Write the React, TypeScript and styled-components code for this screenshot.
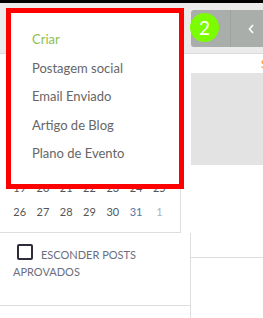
import styled, { createGlobalStyle } from "styled-components";

const GlobalStyle = createGlobalStyle`
  html, body {
    margin: 0;
    padding: 0;
    background: #ffffff;
    font-family: Lato, "Open Sans", sans-serif;
  }
`;

const weekdays = ["D", "S", "T", "Q", "Q", "S", "S"];

type Day = { n: number; muted?: boolean; today?: boolean };

const weeks: Day[][] = [
  [{ n: 1 }, { n: 2 }, { n: 3 }, { n: 4 }, { n: 5 }, { n: 6 }, { n: 7 }],
  [{ n: 8 }, { n: 9 }, { n: 10 }, { n: 11 }, { n: 12 }, { n: 13 }, { n: 14 }],
  [{ n: 15 }, { n: 16 }, { n: 17 }, { n: 18 }, { n: 19 }, { n: 20 }, { n: 21 }],
  [{ n: 19 }, { n: 20 }, { n: 21 }, { n: 22 }, { n: 23 }, { n: 24 }, { n: 25 }],
  [
    { n: 26 },
    { n: 27 },
    { n: 28 },
    { n: 29 },
    { n: 30 },
    { n: 31, today: true },
    { n: 1, muted: true },
  ],
];

const menuItems = [
  "Postagem social",
  "Email Enviado",
  "Artigo de Blog",
  "Plano de Evento",
];

const App = () => {
  return (
    <Page>
      <GlobalStyle />
      <TopBar />

      <Header>
        <div />
        <ButtonGroup>
          <Segment>
            <SegmentLabel>0</SegmentLabel>
          </Segment>
          <Segment $narrow>
            <svg width="6" height="10" viewBox="0 0 6 10">
              <polyline
                points="5,1 1.5,5 5,9"
                fill="none"
                stroke="#ffffff"
                strokeWidth="1.6"
              />
            </svg>
          </Segment>
          <Badge>2</Badge>
        </ButtonGroup>
      </Header>

      <Body>
        <Sidebar>
          <Calendar>
            <MonthTitle>Dezembro 2019</MonthTitle>
            <DayGrid>
              {weekdays.map((w, i) => (
                <WeekdayCell key={i}>{w}</WeekdayCell>
              ))}
              {weeks.flat().map((d, i) => (
                <DayCell key={i} $muted={d.muted} $today={d.today}>
                  {d.n}
                </DayCell>
              ))}
            </DayGrid>
          </Calendar>

          <LowerSidebar>
            <FilterRow>
              <Checkbox />
              Esconder posts aprovados
            </FilterRow>
          </LowerSidebar>
        </Sidebar>

        <Main>
          <ViewRow>
            <ViewLabel>Semana</ViewLabel>
          </ViewRow>
          <GreyPanel />
          <WeekBlock />
        </Main>
      </Body>

      <Dropdown>
        <MenuItem $primary>Criar</MenuItem>
        {menuItems.map((item) => (
          <MenuItem key={item}>{item}</MenuItem>
        ))}
      </Dropdown>
    </Page>
  );
};

export default App;

const Page = styled.div`
  position: relative;
  height: 100vh;
  display: flex;
  flex-direction: column;
  overflow: hidden;
`;

const TopBar = styled.div`
  height: 3px;
  background: #000000;
`;

const Header = styled.div`
  height: 50px;
  display: grid;
  grid-template-columns: 191px 1fr;
  background: #ebebeb;
  border-bottom: 1px solid #dcdcdc;
`;

const ButtonGroup = styled.div`
  position: relative;
  margin-top: 7px;
  height: 37px;
  width: 90px;
  display: flex;
  background: #a9aeab;
  border-radius: 3px;
`;

const Segment = styled.div<{ $narrow?: boolean }>`
  width: ${(p) => (p.$narrow ? "51px" : "41px")};
  display: flex;
  align-items: center;
  justify-content: ${(p) => (p.$narrow ? "center" : "flex-end")};
  padding-right: ${(p) => (p.$narrow ? "10px" : "13px")};
  box-sizing: border-box;
  border-right: ${(p) => (p.$narrow ? "none" : "1px solid #9ea3a0")};
`;

const SegmentLabel = styled.span`
  color: #ffffff;
  font-size: 14px;
`;

const Badge = styled.div`
  position: absolute;
  left: -1px;
  top: 3px;
  width: 29px;
  height: 29px;
  border-radius: 50%;
  background: #7cfc00;
  color: #ffffff;
  font-size: 19px;
  display: flex;
  align-items: center;
  justify-content: center;
`;

const Body = styled.div`
  flex: 1;
  display: grid;
  grid-template-columns: 191px 1fr;
`;

const Sidebar = styled.div`
  display: flex;
  flex-direction: column;
`;

const Calendar = styled.div`
  width: 181px;
  box-sizing: border-box;
  padding: 0 9px 9px 8px;
  border-right: 1px solid #dedede;
  border-bottom: 1px solid #dedede;
`;

const MonthTitle = styled.div`
  height: 25px;
  line-height: 25px;
  text-align: center;
  font-size: 12px;
  color: #555555;
`;

const DayGrid = styled.div`
  display: grid;
  grid-template-columns: repeat(7, 1fr);
  grid-auto-rows: 24px;
`;

const WeekdayCell = styled.div`
  display: flex;
  align-items: center;
  justify-content: center;
  font-size: 11px;
  color: #888888;
`;

const DayCell = styled.div<{ $muted?: boolean; $today?: boolean }>`
  display: flex;
  align-items: center;
  justify-content: center;
  font-size: 11px;
  color: ${(p) => (p.$muted ? "#b0b0b8" : p.$today ? "#4f78a8" : "#555555")};
`;

const LowerSidebar = styled.div`
  flex: 1;
  border-right: 1px solid #dedede;
`;

const FilterRow = styled.div`
  height: 73px;
  box-sizing: border-box;
  padding: 11px 13px 0 13px;
  border-bottom: 1px solid #dedede;
  font-size: 11px;
  line-height: 17px;
  text-transform: uppercase;
  color: #6b6e80;
`;

const Checkbox = styled.span`
  display: inline-block;
  width: 16px;
  height: 16px;
  box-sizing: border-box;
  margin: 0 8px 0 4px;
  border: 2px solid #2f2b38;
  border-radius: 2px;
  vertical-align: -1px;
`;

const Main = styled.div`
  display: flex;
  flex-direction: column;
  overflow: hidden;
`;

const ViewRow = styled.div`
  height: 19px;
  padding-left: 70px;
  display: flex;
  align-items: center;
`;

const ViewLabel = styled.span`
  font-size: 11px;
  color: #f08a24;
  white-space: nowrap;
`;

const GreyPanel = styled.div`
  height: 92px;
  background: #e3e3e3;
`;

const WeekBlock = styled.div`
  height: 92px;
  border-bottom: 1px solid #dedede;
`;

const Dropdown = styled.div`
  position: absolute;
  left: 6px;
  top: 8px;
  width: 178px;
  height: 181px;
  box-sizing: border-box;
  padding: 12px 0 10px 21px;
  background: #ffffff;
  border: 5px solid #ff0000;
`;

const MenuItem = styled.div<{ $primary?: boolean }>`
  height: 28.6px;
  line-height: 28.6px;
  font-size: 13px;
  color: ${(p) => (p.$primary ? "#8cc152" : "#666666")};
`;
